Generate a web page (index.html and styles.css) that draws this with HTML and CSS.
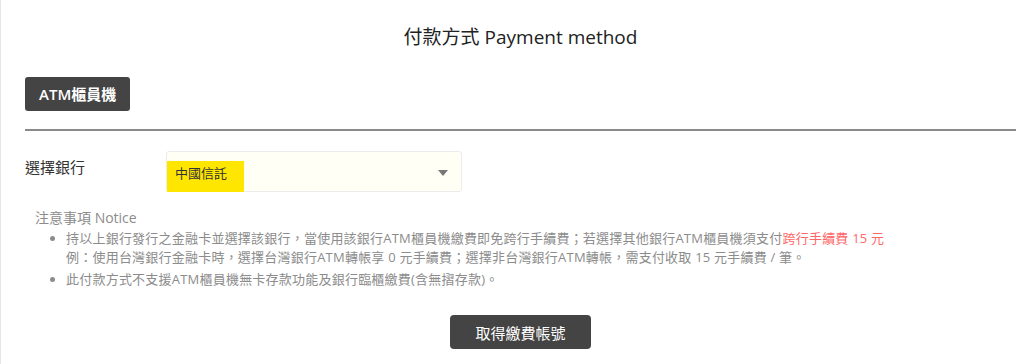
FILE: index.html
```html
<!DOCTYPE html>
<html lang="zh-Hant">
<head>
<meta charset="utf-8">
<title>付款方式 Payment method</title>
<link rel="stylesheet" href="styles.css">
</head>
<body>
<div class="page">
  <h1 class="title">付款方式 Payment method</h1>
  <div class="tabs"><button class="tab">ATM櫃員機</button></div>
  <hr class="rule">
  <div class="field">
    <label class="field-label">選擇銀行</label>
    <div class="select">
      <span class="select-value">中國信託</span>
      <span class="caret"></span>
    </div>
  </div>
  <div class="notice">
    <div class="notice-title">注意事項 Notice</div>
    <ul class="notice-list">
      <li>持以上銀行發行之金融卡並選擇該銀行，當使用該銀行ATM櫃員機繳費即免跨行手續費；若選擇其他銀行ATM櫃員機須支付<span class="warn">跨行手續費 15 元</span><br>例：使用台灣銀行金融卡時，選擇台灣銀行ATM轉帳享 0 元手續費；選擇非台灣銀行ATM轉帳，需支付收取 15 元手續費 / 筆。</li>
      <li>此付款方式不支援ATM櫃員機無卡存款功能及銀行臨櫃繳費(含無摺存款)。</li>
    </ul>
  </div>
  <div class="actions"><button class="btn">取得繳費帳號</button></div>
</div>
</body>
</html>
```

FILE: styles.css
```css
* { box-sizing: border-box; }
html, body { margin: 0; padding: 0; background: #fff; }
body {
  font-family: "Open Sans", "Noto Sans CJK TC", sans-serif;
  color: #333;
}
.page {
  height: 364px;
  overflow: hidden;
  border-left: 1px solid #e6e6e6;
  padding: 24px 8px 0 24px;
}
.title {
  margin: 0;
  font-size: 19px;
  line-height: 26px;
  font-weight: 400;
  text-align: center;
  color: #222;
}
.tabs { margin-top: 27px; display: flex; }
.tab {
  height: 34px;
  padding: 0 14px;
  border: none;
  border-radius: 3px;
  background: #444;
  color: #fff;
  font-family: inherit;
  font-size: 15px;
  font-weight: 600;
  line-height: 34px;
}
.rule {
  margin: 18px 0 0;
  border: none;
  height: 2px;
  background: #8a8a8a;
}
.field {
  margin-top: 20px;
  display: flex;
  align-items: flex-start;
}
.field-label {
  width: 141px;
  padding-top: 6px;
  font-size: 15px;
  line-height: 20px;
  color: #333;
}
.select {
  width: 296px;
  height: 41px;
  display: flex;
  align-items: flex-start;
  justify-content: space-between;
  background: #fffff6;
  border: 1px solid #ececec;
  border-radius: 3px;
}
.select-value {
  margin-top: 9px;
  height: 31px;
  padding: 0 17px 0 8px;
  background: #ffe600;
  font-size: 13px;
  line-height: 24px;
  color: #333;
}
.caret {
  margin: 18px 13px 0 0;
  width: 0;
  height: 0;
  border-left: 5px solid transparent;
  border-right: 5px solid transparent;
  border-top: 6px solid #777;
}
.notice {
  margin-top: 16px;
  padding-left: 10px;
  color: #8c8c8c;
}
.notice-title {
  font-size: 14px;
  line-height: 20px;
}
.notice-list {
  margin: 1px 0 0;
  padding-left: 31px;
  font-size: 13px;
  line-height: 19px;
  letter-spacing: 0.22px;
}
.notice-list li { margin-bottom: 3px; }
.warn { color: #ff6767; }
.actions {
  margin-top: 26px;
  display: flex;
  justify-content: center;
}
.btn {
  width: 141px;
  height: 34px;
  border: none;
  border-radius: 4px;
  background: #444;
  color: #fff;
  font-family: inherit;
  font-size: 15px;
  line-height: 34px;
}
```
